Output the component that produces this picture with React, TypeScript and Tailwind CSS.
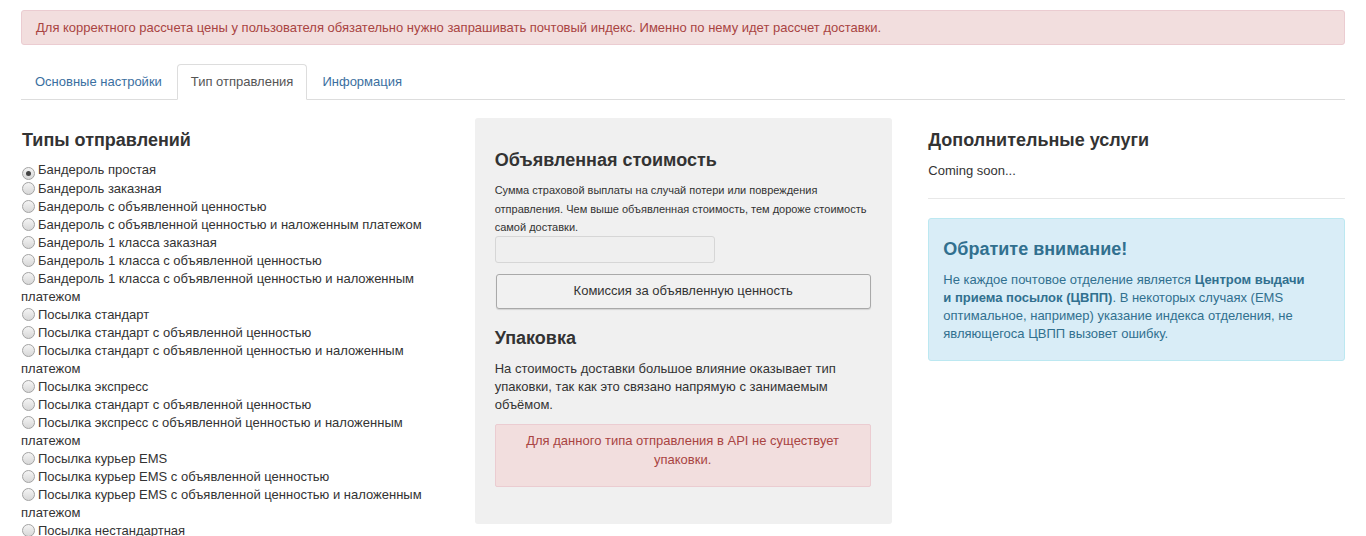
const SHIPMENT_TYPES = [
  'Бандероль простая',
  'Бандероль заказная',
  'Бандероль с объявленной ценностью',
  'Бандероль с объявленной ценностью и наложенным платежом',
  'Бандероль 1 класса заказная',
  'Бандероль 1 класса с объявленной ценностью',
  'Бандероль 1 класса с объявленной ценностью и наложенным платежом',
  'Посылка стандарт',
  'Посылка стандарт с объявленной ценностью',
  'Посылка стандарт с объявленной ценностью и наложенным платежом',
  'Посылка экспресс',
  'Посылка стандарт с объявленной ценностью',
  'Посылка экспресс с объявленной ценностью и наложенным платежом',
  'Посылка курьер EMS',
  'Посылка курьер EMS с объявленной ценностью',
  'Посылка курьер EMS с объявленной ценностью и наложенным платежом',
  'Посылка нестандартная',
]

const TABS = ['Основные настройки', 'Тип отправления', 'Информация']

function Radio({ checked }: { checked: boolean }) {
  return (
    <span className="inline-flex items-center justify-center w-[13px] h-[13px] rounded-full border border-[#a3a3a3] bg-gradient-to-b from-[#f4f4f4] to-[#d8d8d8] align-[-2px] mr-[3px] ml-[1px]">
      {checked && <span className="w-[5px] h-[5px] rounded-full bg-[#444]" />}
    </span>
  )
}

export default function App() {
  return (
    <div className="px-[21px] pt-[10px] text-[13px] leading-[18px] text-[#333] font-['Liberation_Sans',Arial,sans-serif] bg-white">
      {/* Top warning */}
      <div className="h-[35px] flex items-center px-[14px] bg-[#f2dede] border border-[#ebccd1] rounded-[3px] text-[#a94442]">
        Для корректного рассчета цены у пользователя обязательно нужно запрашивать почтовый индекс. Именно по нему идет рассчет доставки.
      </div>

      {/* Tabs */}
      <div className="mt-[19px] flex border-b border-[#ddd]">
        {TABS.map((t, i) => (
          <div
            key={t}
            className={`h-[36px] -mb-px flex items-center px-[13px] mr-[1px] rounded-t-[4px] border ${
              i === 1
                ? 'border-[#ddd] border-b-white bg-white text-[#555]'
                : 'border-transparent text-[#3b6f9f]'
            }`}
          >
            {t}
          </div>
        ))}
      </div>

      <div className="grid grid-cols-3 gap-x-[37px] mt-[18px]">
        {/* Shipment types */}
        <div className="pt-[12px]">
          <h3 className="text-[18px] leading-[20px] font-bold ml-[1px]">Типы отправлений</h3>
          <div className="mt-[11px]">
            {SHIPMENT_TYPES.map((t, i) => (
              <div key={i}>
                <Radio checked={i === 0} />
                {t}
              </div>
            ))}
          </div>
        </div>

        {/* Declared value + packaging */}
        <div className="bg-[#f0f0f0] rounded-[3px] pl-[20px] pr-[21px] pt-[32px] h-[406px] -mr-[1px]">
          <h3 className="text-[18px] leading-[20px] font-bold">Объявленная стоимость</h3>
          <p className="mt-[11px] text-[11px] leading-[18.5px]">
            Сумма страховой выплаты на случай потери или повреждения отправления. Чем выше объявленная стоимость, тем дороже стоимость самой доставки.
          </p>
          <div className="w-[220px] h-[27px] bg-[#efefef] border border-[#d6d6d6] rounded-[3px] -mt-[1px]" />
          <button className="mt-[11px] ml-[1px] w-[375px] h-[35px] bg-[#f1f1f1] border border-[#a9a9a9] rounded-[3px] shadow-[0_1px_1px_rgba(0,0,0,0.12)] text-[13px] text-[#333]">
            Комиссия за объявленную ценность
          </button>
          <h3 className="mt-[19px] text-[18px] leading-[20px] font-bold">Упаковка</h3>
          <p className="mt-[12px] pr-[14px]">
            На стоимость доставки большое влияние оказывает тип упаковки, так как это связано напрямую с занимаемым объёмом.
          </p>
          <div className="mt-[10px] w-[376px] bg-[#f2dede] border border-[#ebccd1] rounded-[2px] text-[#a94442] text-center leading-[19px] pt-[6px] pb-[17px] px-[15px]">
            Для данного типа отправления в API не существует упаковки.
          </div>
        </div>

        {/* Additional services */}
        <div className="pt-[12px]">
          <h3 className="text-[18px] leading-[20px] font-bold">Дополнительные услуги</h3>
          <p className="mt-[12px]">Coming soon...</p>
          <div className="mt-[18px] border-t border-[#e8e8e8]" />
          <div className="mt-[19px] bg-[#d9edf7] border border-[#bce8f1] rounded-[3px] text-[#31708f] pl-[14px] pr-[30px] pt-[20px] pb-[17px]">
            <h4 className="text-[18px] leading-[20px] font-bold">Обратите внимание!</h4>
            <p className="mt-[12px]">
              Не каждое почтовое отделение является <b>Центром выдачи и приема посылок (ЦВПП)</b>. В некоторых случаях (EMS оптимальное, например) указание индекса отделения, не являющегоса ЦВПП вызовет ошибку.
            </p>
          </div>
        </div>
      </div>
    </div>
  )
}
